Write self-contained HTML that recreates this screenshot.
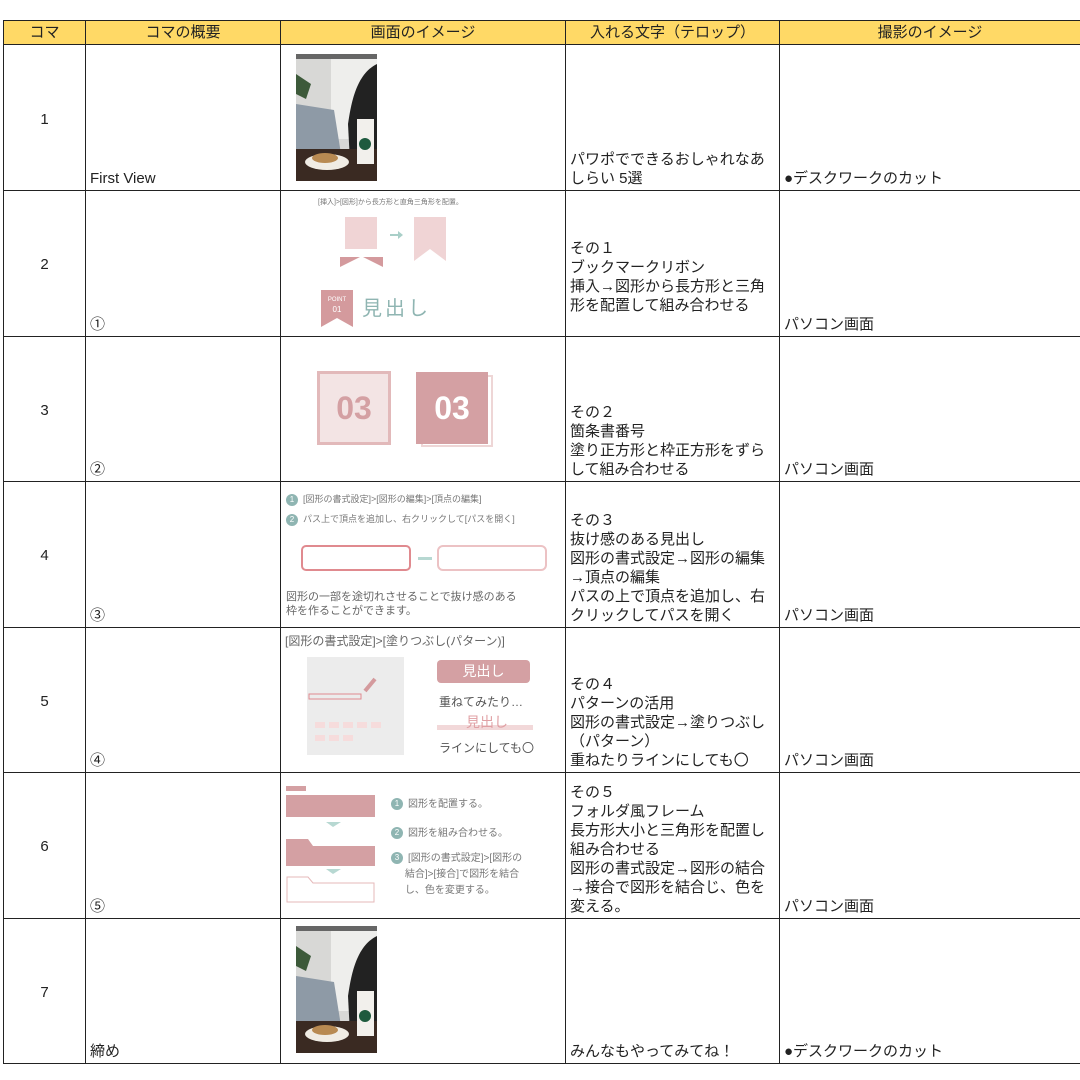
<!DOCTYPE html>
<html><head><meta charset="utf-8"><style>
*{margin:0;padding:0;box-sizing:border-box}
body{width:1080px;height:1080px;background:#fff;position:relative;overflow:hidden;font-family:"Liberation Sans","Noto Sans CJK JP",sans-serif;color:#222;font-size:15px}
.h{position:absolute;top:20px;height:25px;background:#ffd966;border:1px solid #222;border-right:none;text-align:center;line-height:23px;font-size:15px}
.c{position:absolute;border-left:1px solid #222;border-bottom:1px solid #222}
.b{position:absolute;left:4px;right:2px;bottom:2px;line-height:19px}
.n{position:absolute;width:100%;top:50%;margin-top:-7px;text-align:center}
.g{position:absolute}
.pk{background:#d4a0a3}
.lp{background:#f0d6d7}
.sm{font-size:9px;color:#777;white-space:nowrap}
.circ{display:inline-block;width:12px;height:12px;border-radius:50%;background:#8fb5b2;color:#fff;font-size:8px;text-align:center;line-height:12px;margin-right:5px;vertical-align:middle}
</style></head><body>
<div class="h" style="left:3px;width:82px">コマ</div>
<div class="h" style="left:85px;width:195px">コマの概要</div>
<div class="h" style="left:280px;width:285px">画面のイメージ</div>
<div class="h" style="left:565px;width:214px">入れる文字（テロップ）</div>
<div class="h" style="left:779px;width:301px">撮影のイメージ</div>

<div id="grid"></div>
<script>
var tops=[45,190,336,481,627,772,918,1063];
var xs=[3,85,280,565,779,1080];
var col2=["First View","①","②","③","④","⑤","締め"];
var col4=["パワポでできるおしゃれなあ<br>しらい 5選","その１<br>ブックマークリボン<br>挿入→図形から長方形と三角<br>形を配置して組み合わせる<br>&nbsp;","その２<br>箇条書番号<br>塗り正方形と枠正方形をずら<br>して組み合わせる","その３<br>抜け感のある見出し<br>図形の書式設定→図形の編集<br>→頂点の編集<br>パスの上で頂点を追加し、右<br>クリックしてパスを開く","その４<br>パターンの活用<br>図形の書式設定→塗りつぶし<br>（パターン）<br>重ねたりラインにしても〇","その５<br>フォルダ風フレーム<br>長方形大小と三角形を配置し<br>組み合わせる<br>図形の書式設定→図形の結合<br>→接合で図形を結合じ、色を<br>変える。","みんなもやってみてね！"];
var col5=["●デスクワークのカット","パソコン画面","パソコン画面","パソコン画面","パソコン画面","パソコン画面","●デスクワークのカット"];
var h="";
for(var r=0;r<7;r++){var t=tops[r],hh=tops[r+1]-t;
for(var c=0;c<5;c++){var x=xs[c],w=xs[c+1]-x;
var inner="";
if(c==0)inner='<div class="n">'+(r+1)+'</div>';
if(c==1)inner='<div class="b">'+col2[r]+'</div>';
if(c==3)inner='<div class="b">'+col4[r]+'</div>';
if(c==4)inner='<div class="b">'+col5[r]+'</div>';
h+='<div class="c" style="left:'+x+'px;top:'+t+'px;width:'+w+'px;height:'+(hh+1)+'px">'+inner+'</div>';}}
document.getElementById('grid').innerHTML=h;
</script>

<svg class="g" style="left:296px;top:54px" width="81" height="127" viewBox="0 0 81 127">
<rect width="81" height="127" fill="#d8d8d6"/><rect width="81" height="5" fill="#666"/>
<rect x="35" y="5" width="46" height="80" fill="#eeeeec"/>
<path d="M81 10 C60 20 55 50 52 70 L55 127 L81 127Z" fill="#222"/>
<path d="M0 20 L15 30 L10 45 L0 40Z" fill="#3d5a3a"/>
<path d="M0 50 L38 56 L45 100 L0 110Z" fill="#8e9aa6"/>
<rect x="0" y="95" width="81" height="32" fill="#3a2a22"/>
<ellipse cx="31" cy="108" rx="22" ry="8" fill="#f0ece4"/><ellipse cx="29" cy="104" rx="13" ry="5" fill="#b88a52"/>
<rect x="61" y="65" width="17" height="45" fill="#f2f0ec"/><circle cx="69" cy="90" r="6" fill="#1e5a3e"/>
</svg>
<svg class="g" style="left:296px;top:926px" width="81" height="127" viewBox="0 0 81 127">
<rect width="81" height="127" fill="#d8d8d6"/><rect width="81" height="5" fill="#666"/>
<rect x="35" y="5" width="46" height="80" fill="#eeeeec"/>
<path d="M81 10 C60 20 55 50 52 70 L55 127 L81 127Z" fill="#222"/>
<path d="M0 20 L15 30 L10 45 L0 40Z" fill="#3d5a3a"/>
<path d="M0 50 L38 56 L45 100 L0 110Z" fill="#8e9aa6"/>
<rect x="0" y="95" width="81" height="32" fill="#3a2a22"/>
<ellipse cx="31" cy="108" rx="22" ry="8" fill="#f0ece4"/><ellipse cx="29" cy="104" rx="13" ry="5" fill="#b88a52"/>
<rect x="61" y="65" width="17" height="45" fill="#f2f0ec"/><circle cx="69" cy="90" r="6" fill="#1e5a3e"/>
</svg>

<div class="g sm" style="left:318px;top:197px;font-size:7px">[挿入]>[図形]から長方形と直角三角形を配置。</div>
<svg class="g" style="left:338px;top:215px" width="112" height="55"><rect x="7" y="2" width="32" height="32" fill="#f0d4d5"/><path d="M2 42 L22 42 L2 52Z M25 42 L45 42 L45 52Z" fill="#d49a9d"/><path d="M52 20 L62 20" stroke="#a9cfc8" stroke-width="2"/><path d="M60 16 L65 20 L60 24Z" fill="#a9cfc8"/><path d="M76 2 L108 2 L108 46 L92 34 L76 46Z" fill="#f0d4d5"/></svg>
<svg class="g" style="left:321px;top:290px" width="32" height="37"><path d="M0 0 L32 0 L32 37 L16 28 L0 37Z" fill="#d49a9d"/><text x="16" y="11" font-size="6" fill="#fff" text-anchor="middle" font-family="Liberation Sans">POINT</text><text x="16" y="22" font-size="8" fill="#fff" text-anchor="middle" font-family="Liberation Sans">01</text></svg>
<div class="g" style="left:362px;top:292px;font-size:20px;color:#8fb5b2;letter-spacing:3px">見出し</div>

<div class="g" style="left:317px;top:371px;width:74px;height:74px;border:3px solid #e2b9ba;background:#f3e4e4;color:#d4a0a3;font-size:32px;font-weight:bold;text-align:center;line-height:68px">03</div>
<div class="g" style="left:421px;top:375px;width:72px;height:72px;border:2px solid #eed6d6"></div>
<div class="g pk" style="left:416px;top:372px;width:72px;height:72px;color:#fff;font-size:32px;font-weight:bold;text-align:center;line-height:72px">03</div>

<div class="g sm" style="left:286px;top:492px"><span class="circ">1</span>[図形の書式設定]>[図形の編集]>[頂点の編集]</div>
<div class="g sm" style="left:286px;top:512px"><span class="circ">2</span>パス上で頂点を追加し、右クリックして[パスを開く]</div>
<div class="g" style="left:301px;top:545px;width:110px;height:26px;border:2px solid #e08a8f;border-radius:5px"></div>
<div class="g" style="left:418px;top:557px;width:14px;height:3px;background:#b7d8d2"></div>
<div class="g" style="left:437px;top:545px;width:110px;height:26px;border:2px solid #ecc2c4;border-radius:6px"></div>
<div class="g" style="left:286px;top:590px;font-size:11px;color:#666;line-height:14px">図形の一部を途切れさせることで抜け感のある<br>枠を作ることができます。</div>

<div class="g" style="left:285px;top:632px;font-size:12px;color:#666">[図形の書式設定]>[塗りつぶし(パターン)]</div>
<div class="g" style="left:307px;top:657px;width:97px;height:98px;background:#ececec"></div>
<svg class="g" style="left:307px;top:657px" width="97" height="98"><g fill="#f6dcdc"><rect x="8" y="65" width="10" height="6"/><rect x="22" y="65" width="10" height="6"/><rect x="36" y="65" width="10" height="6"/><rect x="50" y="65" width="10" height="6"/><rect x="64" y="65" width="10" height="6"/><rect x="8" y="78" width="10" height="6"/><rect x="22" y="78" width="10" height="6"/><rect x="36" y="78" width="10" height="6"/></g><path d="M68 22 L58 34" stroke="#d49a9d" stroke-width="4"/><rect x="2" y="37" width="52" height="5" fill="none" stroke="#e08a8f"/></svg>
<div class="g pk" style="left:437px;top:660px;width:93px;height:23px;border-radius:4px;color:#fff;font-size:14px;text-align:center;line-height:23px">見出し</div>
<div class="g" style="left:439px;top:693px;font-size:12px;color:#555">重ねてみたり…</div>
<div class="g" style="left:437px;top:725px;width:96px;height:5px;background:#f2d8d9"></div>
<div class="g" style="left:466px;top:712px;font-size:14px;color:#e0a0a4">見出し</div>
<div class="g" style="left:439px;top:739px;font-size:12px;color:#555">ラインにしても〇</div>

<svg class="g" style="left:286px;top:784px" width="92" height="120"><rect x="0" y="2" width="20" height="5" fill="#d4a0a3"/><rect x="0" y="11" width="89" height="22" fill="#d4a0a3"/><path d="M40 38 L55 38 L47 43Z" fill="#b7d8d2"/><path d="M0 55 L22 55 L27 62 L89 62 L89 82 L0 82Z" fill="#d4a0a3"/><path d="M40 85 L55 85 L47 90Z" fill="#b7d8d2"/><path d="M1 93 L22 93 L27 99 L88 99 L88 118 L1 118Z" fill="none" stroke="#e6b8ba"/></svg>
<div class="g sm" style="left:391px;top:795px;font-size:10px"><span class="circ">1</span>図形を配置する。</div>
<div class="g sm" style="left:391px;top:824px;font-size:10px"><span class="circ">2</span>図形を組み合わせる。</div>
<div class="g sm" style="left:391px;top:851px;font-size:10px;line-height:16px;white-space:normal;width:170px"><span class="circ">3</span>[図形の書式設定]>[図形の<br>&nbsp;&nbsp;&nbsp;&nbsp;&nbsp;結合]>[接合]で図形を結合<br>&nbsp;&nbsp;&nbsp;&nbsp;&nbsp;し、色を変更する。</div>
</body></html>
